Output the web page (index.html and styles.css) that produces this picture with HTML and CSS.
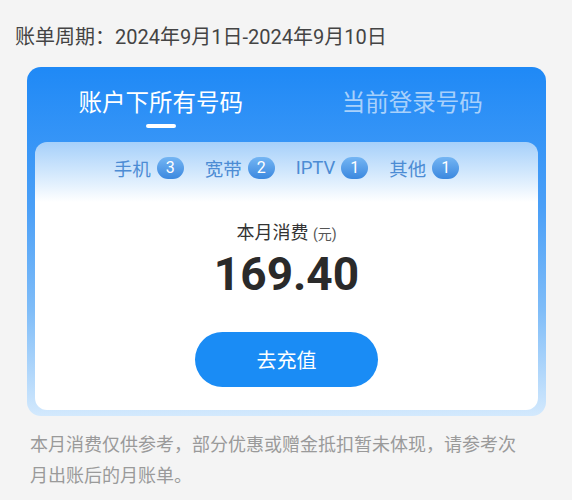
FILE: index.html
```html
<!DOCTYPE html>
<html lang="zh">
<head>
    <meta charset="UTF-8">
    <meta name="viewport" content="width=device-width, initial-scale=1.0">
    <title>本月消费</title>
    <link rel="stylesheet" href="styles.css">
</head>
<body>

    <div class="period">账单周期：2024年9月1日-2024年9月10日</div>

    <div class="card">
        <div class="tabs">
            <div class="tab active">
                <span>账户下所有号码</span>
                <i class="bar"></i>
            </div>
            <div class="tab">
                <span>当前登录号码</span>
            </div>
        </div>

        <div class="panel">
            <div class="types">
                <span class="type">手机 <b>3</b></span>
                <span class="type">宽带 <b>2</b></span>
                <span class="type">IPTV <b>1</b></span>
                <span class="type">其他 <b>1</b></span>
            </div>
            <div class="label">本月消费 <small>(元)</small></div>
            <div class="amount">169.40</div>
            <button class="recharge">去充值</button>
        </div>
    </div>

    <p class="note">本月消费仅供参考，部分优惠或赠金抵扣暂未体现，请参考次月出账后的月账单。</p>

</body>
</html>
```

FILE: styles.css
```css
body {
    margin: 0;
    background-color: #f4f4f4;
    font-family: Roboto, "Noto Sans CJK SC", sans-serif;
}
.period {
    padding: 23px 0 0 15px;
    font-size: 20px;
    line-height: 28px;
    color: #444;
}
.card {
    margin: 16px 26px 0 27px;
    border-radius: 14px;
    background: linear-gradient(to bottom, #1f89f6 0%, #4a9ff7 40%, #80bdf8 70%, #d3e9fd 100%);
    padding: 0 8px 6px;
}
.tabs {
    display: flex;
    height: 75px;
}
.tab {
    flex: 1;
    display: flex;
    flex-direction: column;
    align-items: center;
    padding-top: 22px;
    font-size: 23.5px;
    line-height: 28px;
    color: rgba(255, 255, 255, 0.6);
}
.tab.active {
    color: #fff;
}
.tab .bar {
    width: 30px;
    height: 4px;
    margin-top: 7px;
    border-radius: 2px;
    background-color: #fff;
}
.panel {
    border-radius: 12px;
    background: linear-gradient(to bottom, #a6d0fa 0px, #d8ebfd 35px, #fff 60px);
    padding: 14px 0 23px;
    text-align: center;
}
.types {
    display: flex;
    justify-content: center;
    gap: 21px;
    height: 24px;
    align-items: center;
}
.type {
    display: flex;
    align-items: center;
    gap: 6px;
    font-size: 18.5px;
    color: #4c8cd4;
}
.type b {
    display: inline-block;
    width: 27px;
    height: 22px;
    line-height: 22px;
    border-radius: 11px;
    background: linear-gradient(to bottom, #74b5f3, #3b88df);
    color: #fff;
    font-size: 16px;
    font-weight: normal;
}
.label {
    margin-top: 41px;
    font-size: 18px;
    line-height: 24px;
    color: #333;
}
.label small {
    font-size: 14px;
    color: #555;
}
.amount {
    font-size: 46px;
    line-height: 56px;
    font-weight: bold;
    color: #2a2a2a;
}
.recharge {
    display: block;
    margin: 30px auto 0;
    width: 183px;
    height: 55px;
    border: none;
    border-radius: 28px;
    background-color: #1a8cf5;
    color: #fff;
    font-family: Roboto, "Noto Sans CJK SC", sans-serif;
    font-size: 20px;
    cursor: pointer;
}
.note {
    margin: 13px 0 0;
    padding: 0 40px 0 30px;
    font-size: 18px;
    line-height: 31px;
    color: #9a9a9a;
}
```
